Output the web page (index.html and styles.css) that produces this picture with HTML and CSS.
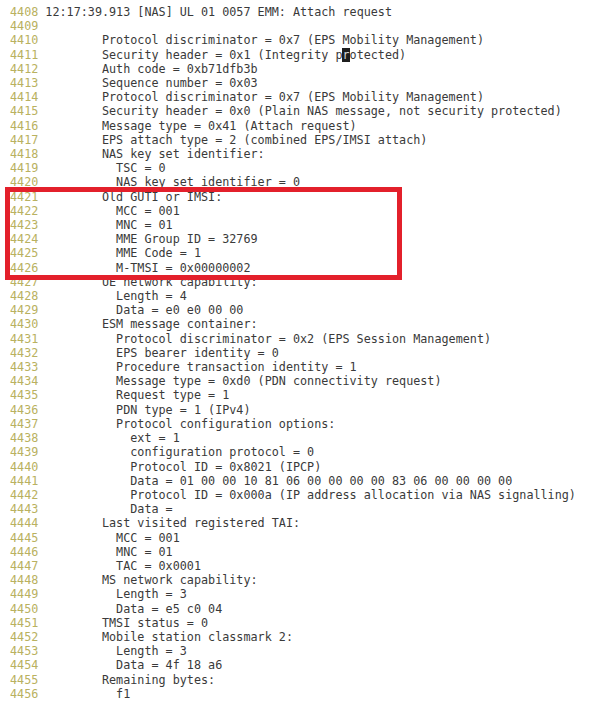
FILE: index.html
```html
<!DOCTYPE html>
<html>
<head>
<meta charset="utf-8">
<link rel="stylesheet" href="styles.css">
</head>
<body>
<div class="log">
<div class="ln"><span class="no">4408</span><span class="first"> 12:17:39.913 [NAS] UL 01 0057 EMM: Attach request</span></div>
<div class="ln"><span class="no">4409</span></div>
<div class="ln"><span class="no">4410</span><span class="tx">Protocol discriminator = 0x7 (EPS Mobility Management)</span></div>
<div class="ln"><span class="no">4411</span><span class="tx">Security header = 0x1 (Integrity p<span class="cursor">r</span>otected)</span></div>
<div class="ln"><span class="no">4412</span><span class="tx">Auth code = 0xb71dfb3b</span></div>
<div class="ln"><span class="no">4413</span><span class="tx">Sequence number = 0x03</span></div>
<div class="ln"><span class="no">4414</span><span class="tx">Protocol discriminator = 0x7 (EPS Mobility Management)</span></div>
<div class="ln"><span class="no">4415</span><span class="tx">Security header = 0x0 (Plain NAS message, not security protected)</span></div>
<div class="ln"><span class="no">4416</span><span class="tx">Message type = 0x41 (Attach request)</span></div>
<div class="ln"><span class="no">4417</span><span class="tx">EPS attach type = 2 (combined EPS/IMSI attach)</span></div>
<div class="ln"><span class="no">4418</span><span class="tx">NAS key set identifier:</span></div>
<div class="ln"><span class="no">4419</span><span class="tx">  TSC = 0</span></div>
<div class="ln"><span class="no">4420</span><span class="tx">  NAS key set identifier = 0</span></div>
<div class="ln"><span class="no">4421</span><span class="tx">Old GUTI or IMSI:</span></div>
<div class="ln"><span class="no">4422</span><span class="tx">  MCC = 001</span></div>
<div class="ln"><span class="no">4423</span><span class="tx">  MNC = 01</span></div>
<div class="ln"><span class="no">4424</span><span class="tx">  MME Group ID = 32769</span></div>
<div class="ln"><span class="no">4425</span><span class="tx">  MME Code = 1</span></div>
<div class="ln"><span class="no">4426</span><span class="tx">  M-TMSI = 0x00000002</span></div>
<div class="ln"><span class="no">4427</span><span class="tx">UE network capability:</span></div>
<div class="ln"><span class="no">4428</span><span class="tx">  Length = 4</span></div>
<div class="ln"><span class="no">4429</span><span class="tx">  Data = e0 e0 00 00</span></div>
<div class="ln"><span class="no">4430</span><span class="tx">ESM message container:</span></div>
<div class="ln"><span class="no">4431</span><span class="tx">  Protocol discriminator = 0x2 (EPS Session Management)</span></div>
<div class="ln"><span class="no">4432</span><span class="tx">  EPS bearer identity = 0</span></div>
<div class="ln"><span class="no">4433</span><span class="tx">  Procedure transaction identity = 1</span></div>
<div class="ln"><span class="no">4434</span><span class="tx">  Message type = 0xd0 (PDN connectivity request)</span></div>
<div class="ln"><span class="no">4435</span><span class="tx">  Request type = 1</span></div>
<div class="ln"><span class="no">4436</span><span class="tx">  PDN type = 1 (IPv4)</span></div>
<div class="ln"><span class="no">4437</span><span class="tx">  Protocol configuration options:</span></div>
<div class="ln"><span class="no">4438</span><span class="tx">    ext = 1</span></div>
<div class="ln"><span class="no">4439</span><span class="tx">    configuration protocol = 0</span></div>
<div class="ln"><span class="no">4440</span><span class="tx">    Protocol ID = 0x8021 (IPCP)</span></div>
<div class="ln"><span class="no">4441</span><span class="tx">    Data = 01 00 00 10 81 06 00 00 00 00 83 06 00 00 00 00</span></div>
<div class="ln"><span class="no">4442</span><span class="tx">    Protocol ID = 0x000a (IP address allocation via NAS signalling)</span></div>
<div class="ln"><span class="no">4443</span><span class="tx">    Data = </span></div>
<div class="ln"><span class="no">4444</span><span class="tx">Last visited registered TAI:</span></div>
<div class="ln"><span class="no">4445</span><span class="tx">  MCC = 001</span></div>
<div class="ln"><span class="no">4446</span><span class="tx">  MNC = 01</span></div>
<div class="ln"><span class="no">4447</span><span class="tx">  TAC = 0x0001</span></div>
<div class="ln"><span class="no">4448</span><span class="tx">MS network capability:</span></div>
<div class="ln"><span class="no">4449</span><span class="tx">  Length = 3</span></div>
<div class="ln"><span class="no">4450</span><span class="tx">  Data = e5 c0 04</span></div>
<div class="ln"><span class="no">4451</span><span class="tx">TMSI status = 0</span></div>
<div class="ln"><span class="no">4452</span><span class="tx">Mobile station classmark 2:</span></div>
<div class="ln"><span class="no">4453</span><span class="tx">  Length = 3</span></div>
<div class="ln"><span class="no">4454</span><span class="tx">  Data = 4f 18 a6</span></div>
<div class="ln"><span class="no">4455</span><span class="tx">Remaining bytes:</span></div>
<div class="ln"><span class="no">4456</span><span class="tx">  f1</span></div>
<div class="highlight"></div>
</div>
</body>
</html>
```

FILE: styles.css
```css
html, body {
  margin: 0;
  padding: 0;
  background: #ffffff;
}

.log {
  position: relative;
  padding: 5px 0 0 10px;
  font-family: "DejaVu Sans Mono", "Liberation Mono", monospace;
  font-size: 11.75px;
  line-height: 14.21px;
  color: #3a3a3a;
}

.ln {
  height: 14.21px;
  white-space: pre;
}

.no {
  display: inline-block;
  width: 13ch;
  color: #b9b160;
}

.first {
  margin-left: -9ch;
  color: #3a3a3a;
}

.cursor {
  background: #1e1e1e;
  color: #d8d8d8;
}

.highlight {
  position: absolute;
  left: 5px;
  top: 187px;
  width: 397px;
  height: 93px;
  box-sizing: border-box;
  border: 5px solid #e3202b;
}
```
